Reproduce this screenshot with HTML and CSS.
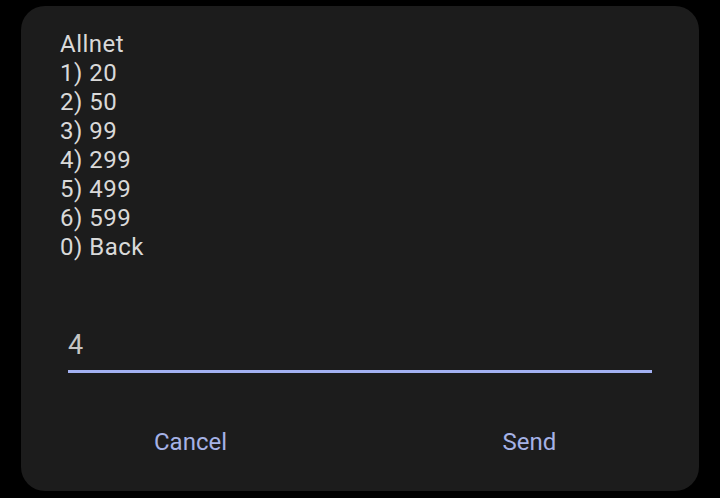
FILE: index.html
```html
<!DOCTYPE html>
<html>
<head>
<meta charset="utf-8">
<link rel="stylesheet" href="styles.css">
</head>
<body>
<div class="dialog">
  <div class="message">
    <div>Allnet</div>
    <div>1) 20</div>
    <div>2) 50</div>
    <div>3) 99</div>
    <div>4) 299</div>
    <div>5) 499</div>
    <div>6) 599</div>
    <div>0) Back</div>
  </div>
  <div class="field">
    <div class="field-value">4</div>
  </div>
  <div class="actions">
    <div class="btn">Cancel</div>
    <div class="btn">Send</div>
  </div>
</div>
</body>
</html>
```
FILE: styles.css
```css
html, body {
  margin: 0;
  padding: 0;
  background: #000;
  width: 720px;
  height: 498px;
  overflow: hidden;
  font-family: Roboto, "Noto Sans", sans-serif;
}
.dialog {
  margin: 6px 0 0 21px;
  width: 678px;
  height: 485px;
  background: #1c1c1c;
  border-radius: 24px;
  box-sizing: border-box;
  padding-top: 24px;
  display: flex;
  flex-direction: column;
}
.message {
  padding-left: 39px;
  font-size: 24px;
  line-height: 29px;
  letter-spacing: 0.5px;
  color: #d9d9d9;
}
.field {
  margin: 66px 47px 0 47px;
  border-bottom: 3px solid #a3b1f2;
  height: 42px;
  box-sizing: content-box;
}
.field-value {
  font-size: 27px;
  line-height: 35px;
  color: #c4c4c4;
}
.actions {
  display: flex;
  margin-top: 41px;
}
.btn {
  flex: 1;
  text-align: center;
  font-size: 24px;
  line-height: 56px;
  color: #a5b2e6;
}
```
